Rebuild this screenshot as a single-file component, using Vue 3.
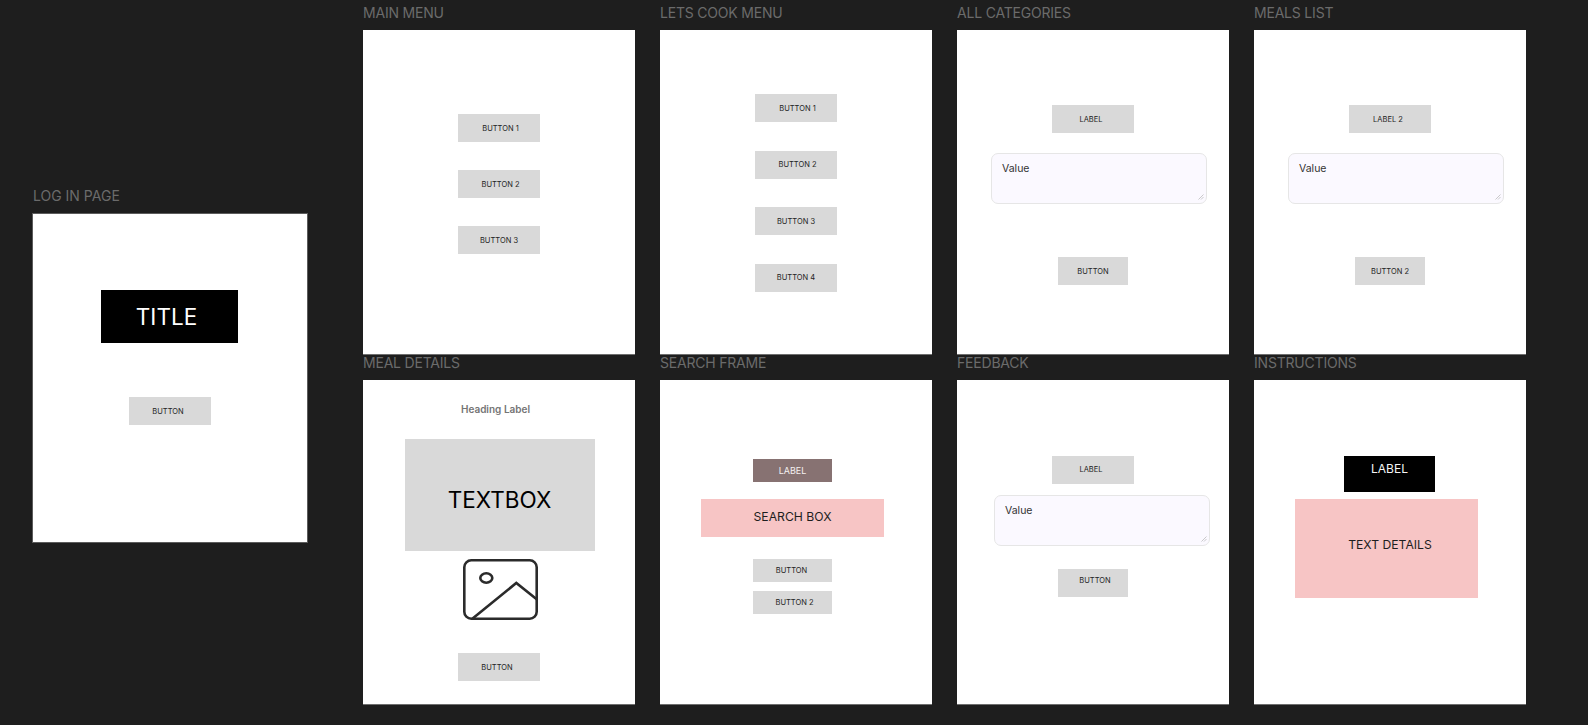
<script setup>
// wireframe screens, top row then bottom row
const mainButtons = ['BUTTON 1', 'BUTTON 2', 'BUTTON 3'];
const cookButtons = ['BUTTON 1', 'BUTTON 2', 'BUTTON 3', 'BUTTON 4'];
</script>

<template>
  <div class="canvas">
    <section class="login">
      <h2 class="frame-name login-name">LOG IN PAGE</h2>
      <div class="frame login-frame">
        <div class="title-box">TITLE</div>
        <div class="btn login-btn nudge-l2">BUTTON</div>
      </div>
    </section>

    <div class="board">
      <section>
        <h2 class="frame-name">MAIN MENU</h2>
        <div class="frame main-frame">
          <div
            v-for="(label, i) in mainButtons"
            :key="label"
            class="btn"
            :class="i < 2 ? 'nudge-r2' : ''"
          >
            {{ label }}
          </div>
        </div>
      </section>

      <section>
        <h2 class="frame-name">LETS COOK MENU</h2>
        <div class="frame cook-frame">
          <div
            v-for="(label, i) in cookButtons"
            :key="label"
            class="btn"
            :class="i < 2 ? 'nudge-r2' : ''"
          >
            {{ label }}
          </div>
        </div>
      </section>

      <section>
        <h2 class="frame-name">ALL CATEGORIES</h2>
        <div class="frame list-frame">
          <div class="btn nudge-l2">LABEL</div>
          <div class="value-box">
            Value
            <svg class="resize-grip" viewBox="0 0 6 6" fill="none" stroke="#b5b5b5" stroke-width="0.7">
              <path d="M0.5 5.5 L5.5 0.5 M3 5.5 L5.5 3" />
            </svg>
          </div>
          <div class="btn btn-narrow">BUTTON</div>
        </div>
      </section>

      <section>
        <h2 class="frame-name">MEALS LIST</h2>
        <div class="frame list-frame">
          <div class="btn nudge-l2">LABEL 2</div>
          <div class="value-box">
            Value
            <svg class="resize-grip" viewBox="0 0 6 6" fill="none" stroke="#b5b5b5" stroke-width="0.7">
              <path d="M0.5 5.5 L5.5 0.5 M3 5.5 L5.5 3" />
            </svg>
          </div>
          <div class="btn btn-narrow">BUTTON 2</div>
        </div>
      </section>

      <section>
        <h2 class="frame-name">MEAL DETAILS</h2>
        <div class="frame details-frame">
          <div class="heading-label">Heading Label</div>
          <div class="textbox">TEXTBOX</div>
          <svg class="picture" viewBox="0 0 75 61" fill="none" stroke="#2b2b2b" stroke-width="2.6">
            <rect x="1.3" y="1.3" width="72.4" height="58.4" rx="7" />
            <ellipse cx="23.3" cy="19" rx="6" ry="4.7" />
            <path d="M9 60 L53.3 24 L74 40.5" />
          </svg>
          <div class="btn details-btn nudge-l2">BUTTON</div>
        </div>
      </section>

      <section>
        <h2 class="frame-name">SEARCH FRAME</h2>
        <div class="frame search-frame">
          <div class="search-label">LABEL</div>
          <div class="search-box">SEARCH BOX</div>
          <div class="btn btn-short search-first">BUTTON</div>
          <div class="btn btn-short search-second nudge-r4">BUTTON 2</div>
        </div>
      </section>

      <section>
        <h2 class="frame-name">FEEDBACK</h2>
        <div class="frame feedback-frame">
          <div class="btn feedback-label nudge-l2">LABEL</div>
          <div class="value-box feedback-value">
            Value
            <svg class="resize-grip" viewBox="0 0 6 6" fill="none" stroke="#b5b5b5" stroke-width="0.7">
              <path d="M0.5 5.5 L5.5 0.5 M3 5.5 L5.5 3" />
            </svg>
          </div>
          <div class="btn btn-narrow feedback-btn nudge-r4">BUTTON</div>
        </div>
      </section>

      <section>
        <h2 class="frame-name">INSTRUCTIONS</h2>
        <div class="frame instructions-frame">
          <div class="instructions-label">LABEL</div>
          <div class="text-details">TEXT DETAILS</div>
        </div>
      </section>
    </div>
  </div>
</template>

<style>
html,
body {
  background: #1e1e1e;
}
</style>

<style scoped>
.canvas {
  display: flex;
  align-items: flex-start;
  width: 1588px;
  height: 725px;
  padding-left: 33px;
  box-sizing: border-box;
  overflow: hidden;
  background: #1e1e1e;
  font-family: Inter, "Liberation Sans", sans-serif;
  color: #1e1e1e;
}

.board {
  display: grid;
  grid-template-columns: repeat(4, 272px);
  column-gap: 25px;
  margin-left: 56px;
  padding-top: 4px;
}

.frame-name {
  margin: 0 0 9px;
  font-size: 14px;
  font-weight: 400;
  line-height: 17px;
  letter-spacing: -0.2px;
  color: #6b6b6b;
}

.frame {
  display: flex;
  flex-direction: column;
  align-items: center;
  width: 272px;
  height: 324px;
  box-sizing: border-box;
  background: #fff;
  box-shadow: 0 1px 0 #6e6e6e;
}

/* log in */
.login {
  padding-top: 187px;
}

.login-name {
  margin-bottom: 10px;
  letter-spacing: 0;
}

.login-frame {
  width: 274px;
  height: 328px;
  padding-top: 76px;
  box-shadow: 0 0 0 1px #5c5c5c;
}

.title-box {
  display: flex;
  align-items: center;
  justify-content: center;
  width: 137px;
  height: 53px;
  margin-right: 1px;
  padding-right: 6px;
  box-sizing: border-box;
  background: #000;
  color: #fff;
  font-size: 22.5px;
}

.login-btn {
  margin-top: 54px;
}

/* shared button */
.btn {
  display: flex;
  align-items: center;
  justify-content: center;
  flex-shrink: 0;
  width: 82px;
  height: 28px;
  padding-top: 1px;
  box-sizing: border-box;
  background: #d9d9d9;
  font-size: 7.5px;
  line-height: 10px;
}

.btn-narrow {
  width: 70px;
}

.btn-short {
  width: 79px;
  height: 23px;
}

.nudge-l2 {
  padding-right: 4px;
}

.nudge-r2 {
  padding-left: 3px;
}

.nudge-r4 {
  padding-left: 4px;
}

/* menus */
.main-frame {
  padding-top: 84px;
  gap: 28px;
}

.cook-frame {
  padding-top: 64px;
  gap: 28.6px;
}

.list-frame {
  padding-top: 75px;
}

.value-box {
  position: relative;
  flex-shrink: 0;
  width: 216px;
  height: 51px;
  margin: 20px 0 53px 12px;
  padding: 8px 10px;
  box-sizing: border-box;
  border: 1px solid #e6e6e6;
  border-radius: 7px;
  background: #fbf9ff;
  color: #333;
  font-size: 10.5px;
  line-height: 14px;
}

.resize-grip {
  position: absolute;
  right: 2px;
  bottom: 3px;
  width: 6px;
  height: 6px;
}

/* meal details */
.details-frame {
  padding-top: 23px;
}

.heading-label {
  height: 12px;
  margin-right: 7px;
  font-size: 10px;
  font-weight: 600;
  line-height: 12px;
  color: #757575;
}

.textbox {
  display: flex;
  align-items: center;
  justify-content: center;
  flex-shrink: 0;
  width: 190px;
  height: 112px;
  margin: 24px 0 0 1px;
  padding-top: 9px;
  box-sizing: border-box;
  background: #d9d9d9;
  color: #000;
  font-size: 22.5px;
}

.picture {
  flex-shrink: 0;
  width: 75px;
  height: 61px;
  margin: 8px 0 0 2px;
}

.details-btn {
  margin-top: 33px;
}

/* search */
.search-frame {
  padding-top: 79px;
}

.search-label {
  display: flex;
  align-items: center;
  justify-content: center;
  flex-shrink: 0;
  width: 79px;
  height: 23px;
  margin-right: 7px;
  background: #877272;
  color: #f4f0f0;
  font-size: 9px;
}

.search-box {
  display: flex;
  align-items: center;
  justify-content: center;
  flex-shrink: 0;
  width: 183px;
  height: 38px;
  margin: 17px 7px 0 0;
  padding-bottom: 4px;
  box-sizing: border-box;
  background: #f7c5c5;
  font-size: 12.2px;
}

.search-first {
  margin: 22px 7px 0 0;
  padding-right: 2px;
}

.search-second {
  margin: 9px 7px 0 0;
}

/* feedback */
.feedback-frame {
  padding-top: 76px;
}

.feedback-label {
  padding-bottom: 2px;
}

.feedback-value {
  margin: 11px 0 0 18px;
}

.feedback-btn {
  margin-top: 23px;
  padding-bottom: 5px;
}

/* instructions */
.instructions-frame {
  padding-top: 76px;
}

.instructions-label {
  flex-shrink: 0;
  width: 91px;
  height: 36px;
  margin-right: 1px;
  padding-top: 5px;
  box-sizing: border-box;
  background: #000;
  color: #f5f5f5;
  font-size: 12px;
  line-height: 15px;
  text-align: center;
}

.text-details {
  display: flex;
  align-items: center;
  justify-content: center;
  flex-shrink: 0;
  width: 183px;
  height: 99px;
  margin: 7px 7px 0 0;
  padding: 0 0 8px 7px;
  box-sizing: border-box;
  background: #f7c5c5;
  font-size: 12.2px;
}
</style>
